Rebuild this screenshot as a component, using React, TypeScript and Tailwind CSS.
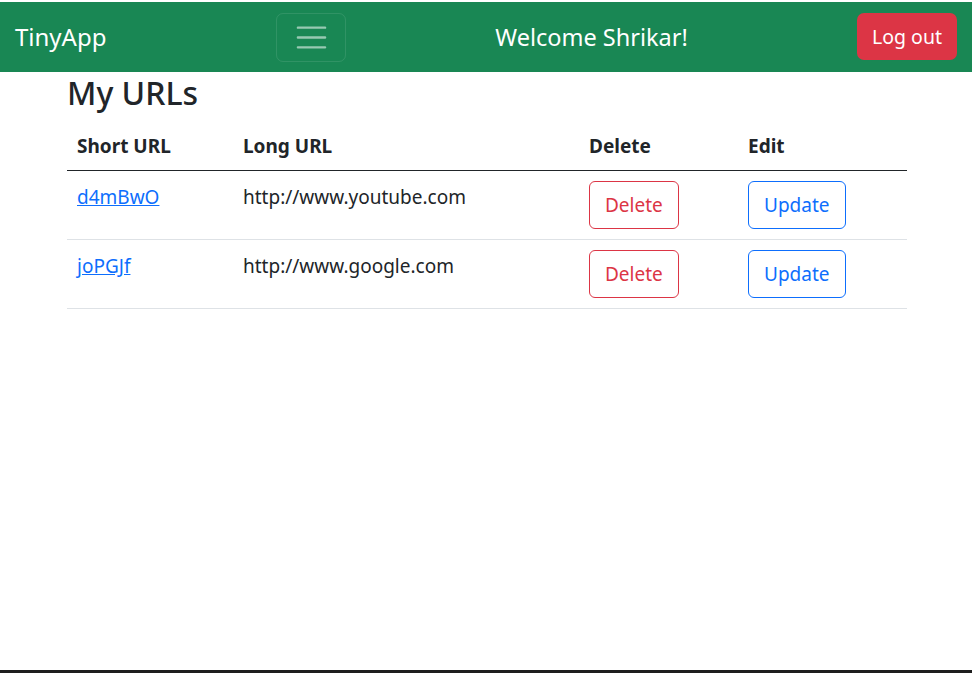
const rows = [
  { short: "d4mBwO", long: "http://www.youtube.com" },
  { short: "joPGJf", long: "http://www.google.com" },
];

function TogglerIcon() {
  return (
    <svg width="37" height="37" viewBox="0 0 30 30" fill="none" className="block">
      <path
        d="M4 7h22M4 15h22M4 23h22"
        stroke="rgba(255,255,255,0.55)"
        strokeWidth="2"
        strokeLinecap="round"
        strokeMiterlimit="10"
      />
    </svg>
  );
}

export default function App() {
  return (
    <div
      className="flex h-[673px] flex-col bg-white text-[#212529]"
      style={{ fontFamily: '"Noto Sans", "Open Sans", sans-serif' }}
    >
      <div className="h-[2px] bg-white" />

      {/* navbar */}
      <nav className="flex h-[70px] items-center bg-[#198754] px-[15px]">
        <span className="w-[261px] text-[24px] leading-[30px] text-white">TinyApp</span>
        <button
          type="button"
          className="flex h-[49px] w-[70px] items-center justify-center rounded-[7px] border border-white/10"
        >
          <TogglerIcon />
        </button>
        <div className="flex flex-1 justify-center pr-[20px] text-[23.5px] leading-[30px] text-white">
          Welcome Shrikar!
        </div>
        <button
          type="button"
          className="mb-[1px] h-[47px] w-[100px] rounded-[7px] bg-[#dc3545] text-[19.5px] leading-[30px] text-white"
        >
          Log out
        </button>
      </nav>

      {/* content */}
      <main className="ml-[67px] w-[840px]">
        <h3 className="mb-[6px] text-[32px] font-medium leading-[42px]">My URLs</h3>
        <table className="w-full border-collapse text-[19px] leading-[30px]">
          <thead>
            <tr className="border-b border-[#212529] text-left">
              <th className="w-[166px] px-[10px] pt-[11px] pb-[9px] font-bold">Short URL</th>
              <th className="w-[346px] px-[10px] pt-[11px] pb-[9px] font-bold">Long URL</th>
              <th className="w-[159px] px-[10px] pt-[11px] pb-[9px] font-bold">Delete</th>
              <th className="px-[10px] pt-[11px] pb-[9px] font-bold">Edit</th>
            </tr>
          </thead>
          <tbody>
            {rows.map((r) => (
              <tr key={r.short} className="border-b border-[#dee2e6] align-top">
                <td className="p-[10px] pt-[11px]">
                  <a href="#" className="text-[#0d6efd] underline">
                    {r.short}
                  </a>
                </td>
                <td className="p-[10px] pt-[11px]">{r.long}</td>
                <td className="p-[10px]">
                  <button
                    type="button"
                    className="h-[48px] rounded-[6px] border border-[#dc3545] px-[15px] text-[19px] leading-[30px] text-[#dc3545]"
                  >
                    Delete
                  </button>
                </td>
                <td className="p-[10px]">
                  <button
                    type="button"
                    className="h-[48px] rounded-[6px] border border-[#0d6efd] px-[15px] text-[19px] leading-[30px] text-[#0d6efd]"
                  >
                    Update
                  </button>
                </td>
              </tr>
            ))}
          </tbody>
        </table>
      </main>

      <div className="flex-1" />
      <div className="h-[3px] bg-[#1e1e1e]" />
    </div>
  );
}
